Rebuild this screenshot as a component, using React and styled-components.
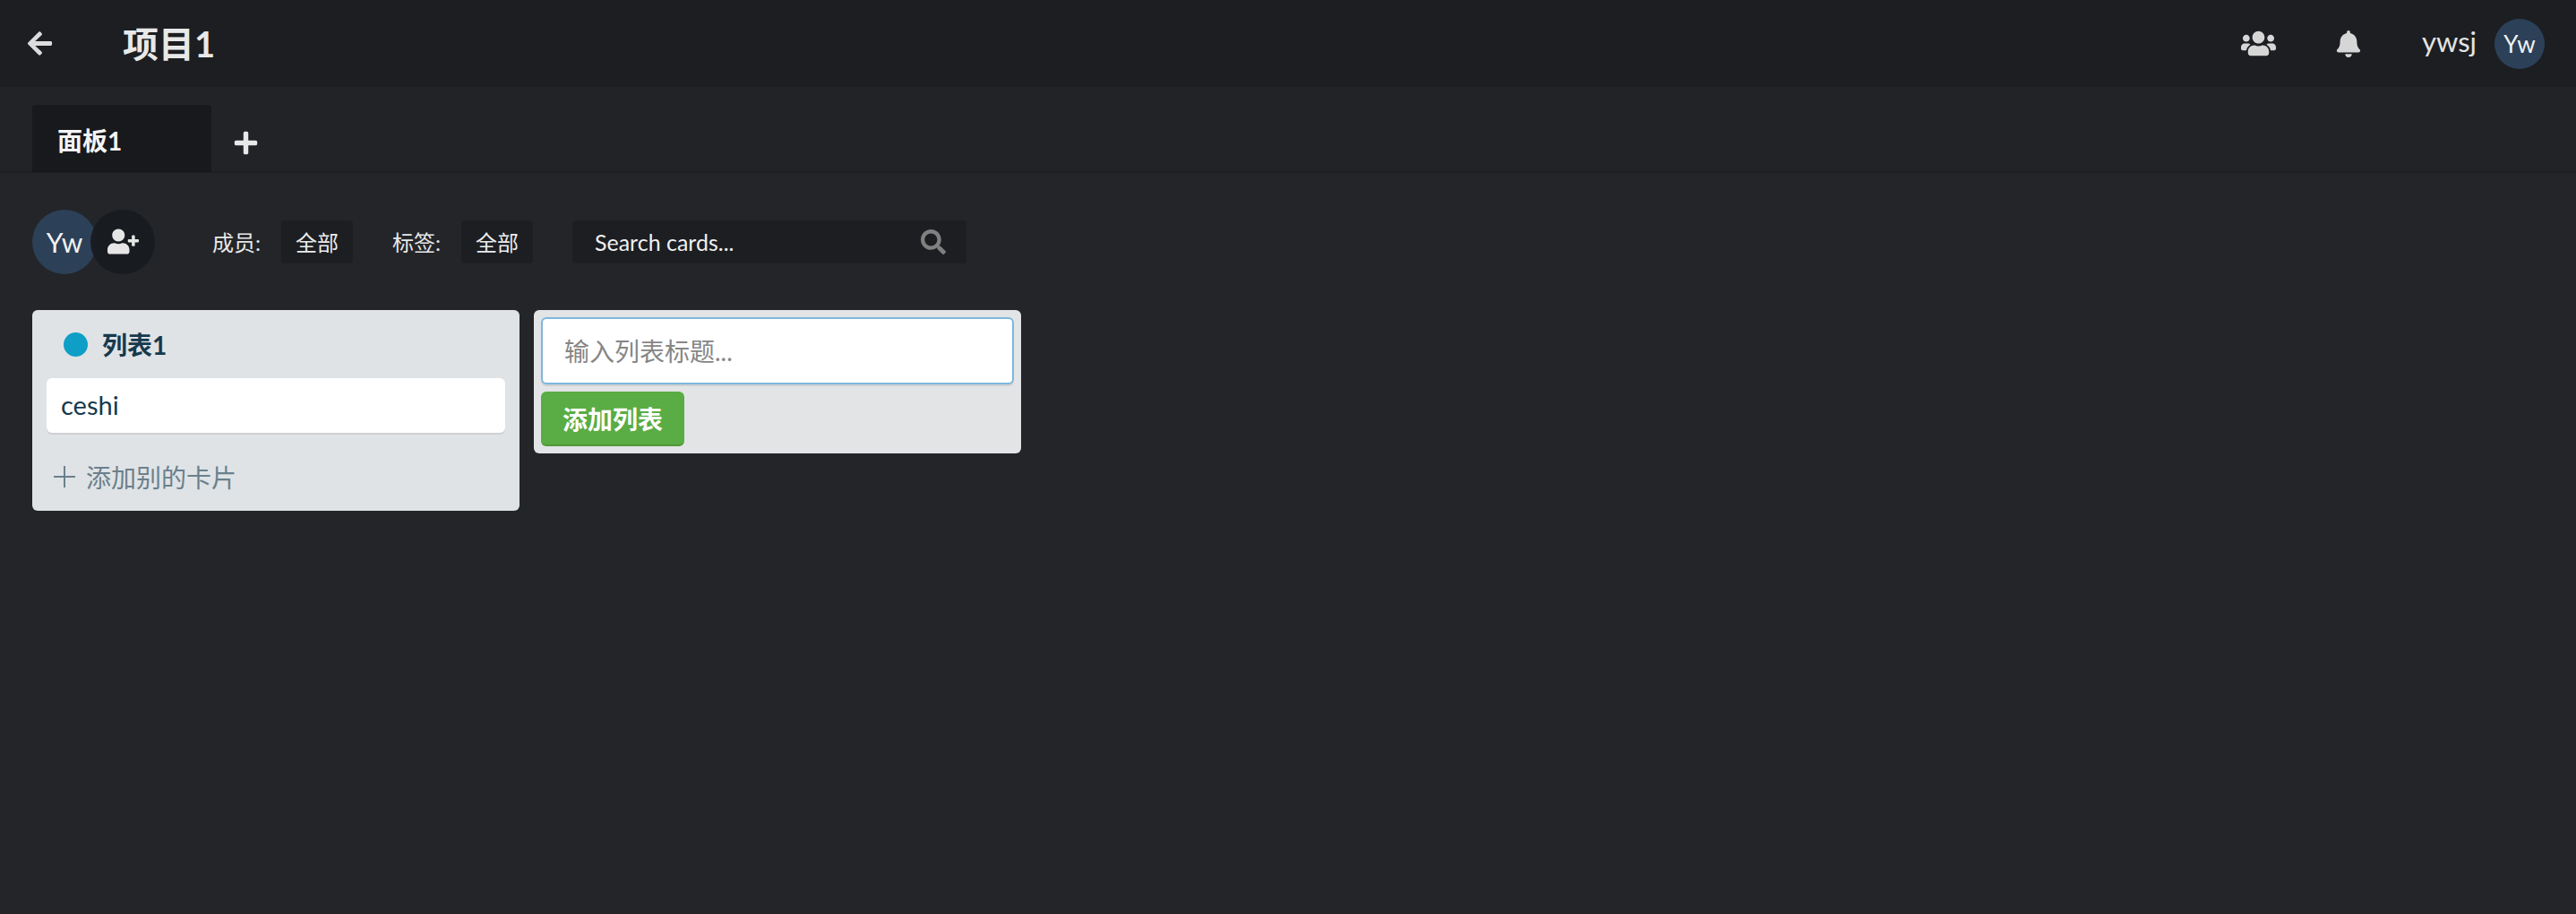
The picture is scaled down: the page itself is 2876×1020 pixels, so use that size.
import styled, { createGlobalStyle } from "styled-components";
import { FaArrowLeft, FaBell, FaPlus, FaSearch, FaUserPlus, FaUsers } from "react-icons/fa";

const GlobalStyle = createGlobalStyle`
  html, body {
    margin: 0;
    height: 100%;
    background: #232529;
  }
  * { box-sizing: border-box; }
  body {
    font-family: "Lato", "Noto Sans CJK SC", sans-serif;
  }
`;

const Page = styled.div`
  height: 1020px;
  display: flex;
  flex-direction: column;
  background: #232529;
`;

const TopBar = styled.header`
  height: 97px;
  display: flex;
  align-items: center;
  background: #1c1e22;
  color: #e6e6e6;
  padding: 0 35px 0 29px;
`;

const BackButton = styled.div`
  display: flex;
  width: 108px;
  font-size: 31px;
  color: #dcdcdc;
`;

const ProjectTitle = styled.h1`
  margin: -4px 0 0;
  font-size: 40px;
  font-weight: 700;
  color: #e8e8e8;
  flex: 1;
`;

const TopIcon = styled.div`
  display: flex;
  color: #d6d6d6;
  font-size: ${(props) => props.size}px;
  margin-right: ${(props) => props.gap}px;
`;

const UserName = styled.span`
  font-size: 31px;
  color: #e4e4e4;
  margin-right: 20px;
  margin-top: -5px;
`;

const Avatar = styled.div`
  width: ${(props) => props.size}px;
  height: ${(props) => props.size}px;
  border-radius: 50%;
  background: #2c4058;
  color: #f2f2f2;
  display: flex;
  align-items: center;
  justify-content: center;
  font-size: ${(props) => props.fontSize}px;
  flex-shrink: 0;
`;

const TabBar = styled.nav`
  height: 96px;
  display: flex;
  align-items: flex-end;
  padding: 0 36px;
  background: #212327;
  border-bottom: 2px solid #1c1e22;
`;

const Tab = styled.div`
  width: 200px;
  height: 75px;
  margin-bottom: -1px;
  padding: 20px 0 0 28px;
  background: #17191d;
  border-radius: 4px 4px 0 0;
  font-size: 28px;
  font-weight: 700;
  line-height: 40px;
  color: #f4f4f4;
`;

const AddTab = styled.div`
  display: flex;
  margin: 0 0 17px 24px;
  font-size: 29px;
  color: #e8e8e8;
`;

const FilterBar = styled.section`
  display: flex;
  align-items: center;
  padding: 0 36px;
  height: 153px;
  flex-shrink: 0;
`;

const MemberStack = styled.div`
  display: flex;
  margin-right: 64px;
`;

const AddMember = styled.div`
  width: 72px;
  height: 72px;
  margin-left: -7px;
  border-radius: 50%;
  background: rgba(24, 26, 30, 0.92);
  color: #e6e6e6;
  display: flex;
  align-items: center;
  justify-content: center;
  font-size: 35px;
  position: relative;
`;

const FilterLabel = styled.span`
  font-size: 24px;
  color: #e8e8e8;
  margin-right: 23px;
`;

const FilterChip = styled.div`
  width: 80px;
  height: 48px;
  background: #1c1e22;
  border-radius: 4px;
  color: #ececec;
  font-size: 24px;
  display: flex;
  align-items: center;
  justify-content: center;
  margin-right: 44px;
`;

const SearchBox = styled.div`
  width: 440px;
  height: 48px;
  padding: 0 23px 0 25px;
  display: flex;
  align-items: center;
  justify-content: space-between;
  background: #1c1e22;
  border-radius: 4px;
  color: #f0f0f0;
  font-size: 25px;
`;

const SearchIcon = styled.div`
  display: flex;
  font-size: 28px;
  color: #808080;
`;

const Board = styled.main`
  display: flex;
  align-items: flex-start;
  gap: 16px;
  padding: 0 36px;
`;

const ListColumn = styled.div`
  width: 544px;
  height: 224px;
  padding: 0 16px;
  background: #dfe3e6;
  border-radius: 6px;
  display: flex;
  flex-direction: column;
`;

const ListHeader = styled.div`
  height: 76px;
  display: flex;
  align-items: center;
  padding: 0 0 0 19px;
  gap: 16px;
`;

const ColorDot = styled.span`
  width: 27px;
  height: 27px;
  border-radius: 50%;
  background: #0f9fc6;
`;

const ListTitle = styled.span`
  font-size: 28px;
  font-weight: 700;
  color: #17394d;
`;

const CardItem = styled.div`
  height: 61px;
  padding: 0 0 3px 16px;
  display: flex;
  align-items: center;
  background: #fff;
  border-radius: 6px;
  box-shadow: 0 2px 0 #cfd0d2;
  font-size: 29px;
  color: #17394d;
`;

const AddCard = styled.div`
  display: flex;
  align-items: center;
  gap: 12px;
  margin-top: 29px;
  padding-left: 8px;
  font-size: 28px;
  color: #6b808c;
`;

const ThinPlus = styled.svg`
  width: 24px;
  height: 24px;
  stroke: #6b808c;
  stroke-width: 2;
`;

const AddListPanel = styled.form`
  width: 544px;
  height: 160px;
  padding: 8px;
  background: #e2e4e6;
  border-radius: 6px;
  display: flex;
  flex-direction: column;
  align-items: flex-start;
  gap: 8px;
`;

const TitleInput = styled.input`
  width: 100%;
  height: 76px;
  padding: 0 24px;
  background: #fff;
  border: 2px solid #7fb7dd;
  border-radius: 6px;
  box-shadow: 0 2px 0 #cfd0d2;
  font: inherit;
  font-size: 28px;
  outline: none;

  &::placeholder {
    color: #868686;
    opacity: 1;
  }
`;

const AddListButton = styled.button`
  width: 160px;
  height: 61px;
  padding: 0;
  background: #5aac44;
  border: none;
  border-bottom: 2px solid #519839;
  border-radius: 6px;
  color: #fff;
  font: inherit;
  font-size: 28px;
  font-weight: 700;
`;

export default function App() {
  return (
    <Page>
      <GlobalStyle />
      <TopBar>
        <BackButton>
          <FaArrowLeft />
        </BackButton>
        <ProjectTitle>项目1</ProjectTitle>
        <TopIcon size={39} gap={66}>
          <FaUsers />
        </TopIcon>
        <TopIcon size={30} gap={67}>
          <FaBell />
        </TopIcon>
        <UserName>ywsj</UserName>
        <Avatar size={56} fontSize={26}>Yw</Avatar>
      </TopBar>
      <TabBar>
        <Tab>面板1</Tab>
        <AddTab>
          <FaPlus />
        </AddTab>
      </TabBar>
      <FilterBar>
        <MemberStack>
          <Avatar size={72} fontSize={30}>Yw</Avatar>
          <AddMember>
            <FaUserPlus />
          </AddMember>
        </MemberStack>
        <FilterLabel>成员:</FilterLabel>
        <FilterChip>全部</FilterChip>
        <FilterLabel>标签:</FilterLabel>
        <FilterChip>全部</FilterChip>
        <SearchBox>
          <span>Search cards...</span>
          <SearchIcon>
            <FaSearch />
          </SearchIcon>
        </SearchBox>
      </FilterBar>
      <Board>
        <ListColumn>
          <ListHeader>
            <ColorDot />
            <ListTitle>列表1</ListTitle>
          </ListHeader>
          <CardItem>ceshi</CardItem>
          <AddCard>
            <ThinPlus viewBox="0 0 24 24">
              <path d="M12 0v24M0 12h24" />
            </ThinPlus>
            添加别的卡片
          </AddCard>
        </ListColumn>
        <AddListPanel>
          <TitleInput placeholder="输入列表标题..." />
          <AddListButton type="button">添加列表</AddListButton>
        </AddListPanel>
      </Board>
    </Page>
  );
}
